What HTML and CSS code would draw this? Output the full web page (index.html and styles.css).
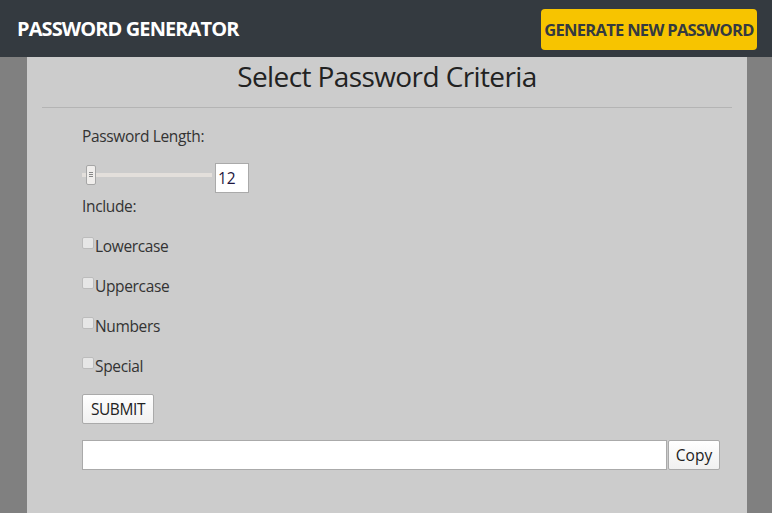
FILE: index.html
```html
<!DOCTYPE html>
<html>
<head>
<meta charset="utf-8">
<link rel="stylesheet" href="styles.css">
</head>
<body>
<header class="topbar">
  <div class="brand">PASSWORD GENERATOR</div>
  <button class="gen-btn">GENERATE NEW PASSWORD</button>
</header>
<main class="card">
  <h1 class="title">Select Password Criteria</h1>
  <hr class="rule">
  <form class="form">
    <div class="label">Password Length:</div>
    <div class="length-row">
      <input class="slider" type="range" min="8" max="128" value="12">
      <input class="num" type="text" value="12">
    </div>
    <div class="label include">Include:</div>
    <label class="check"><input type="checkbox">Lowercase</label>
    <label class="check"><input type="checkbox">Uppercase</label>
    <label class="check"><input type="checkbox">Numbers</label>
    <label class="check"><input type="checkbox">Special</label>
    <button type="button" class="submit">SUBMIT</button>
    <div class="out-row">
      <input class="out" type="text">
      <button type="button" class="copy">Copy</button>
    </div>
  </form>
</main>
</body>
</html>
```
FILE: styles.css
```css
* { box-sizing: border-box; }
html, body { margin: 0; padding: 0; height: 100%; }
body {
  background: #808080;
  font-family: "Open Sans", "DejaVu Sans", sans-serif;
  color: #333;
  display: flex;
  flex-direction: column;
  overflow: hidden;
}
.topbar {
  height: 57px;
  background: #343a40;
  display: flex;
  align-items: center;
  justify-content: space-between;
  padding: 0 15px 0 17px;
  flex: none;
}
.brand {
  color: #fff;
  font-weight: 700;
  font-size: 20px;
  letter-spacing: -0.9px;
}
.gen-btn {
  background: #f7c400;
  border: none;
  border-radius: 4px;
  height: 41px;
  width: 216px;
  padding: 0;
  color: #343a40;
  font-family: "Open Sans", sans-serif;
  font-weight: 700;
  font-size: 16.5px;
  letter-spacing: -0.7px;
  margin-top: 1px;
  white-space: nowrap;
}
.card {
  width: 720px;
  margin: 0 0 0 27px;
  background: #cccccc;
  flex: 1;
  padding: 0 15px;
}
.title {
  margin: 0;
  padding-top: 0;
  text-align: center;
  font-weight: 400;
  font-size: 28px;
  letter-spacing: -0.6px;
  color: #222;
  line-height: 38px;
}
.rule {
  margin: 12px 0 0;
  border: none;
  border-top: 1px solid #b4b4b4;
}
.form {
  padding: 17px 0 0 40px;
  display: flex;
  flex-direction: column;
  align-items: flex-start;
  font-size: 15.5px;
  letter-spacing: -0.35px;
}
.label { line-height: 22px; color: #333; }
.length-row {
  display: flex;
  align-items: center;
  margin-top: 16px;
}
.slider {
  -webkit-appearance: none;
  appearance: none;
  width: 130px;
  height: 22px;
  margin: 0 3px 6px 0;
  background: transparent;
}
.slider::-webkit-slider-runnable-track {
  height: 4px;
  background: #e3dfdb;
  border-radius: 0;
}
.slider::-webkit-slider-thumb {
  -webkit-appearance: none;
  width: 10px;
  height: 20px;
  margin-top: -8px;
  border: 1px solid #a6a6a6;
  border-radius: 2px;
  background:
    linear-gradient(#888, #888) 2px 6px / 4px 1px no-repeat,
    linear-gradient(#888, #888) 2px 8px / 4px 1px no-repeat,
    linear-gradient(#888, #888) 2px 10px / 4px 1px no-repeat,
    #f0eeec;
}
.num {
  width: 34px;
  height: 30px;
  border: 1px solid #aaa;
  background: #fff;
  font-family: "Open Sans", sans-serif;
  font-size: 15.5px;
  padding: 0 0 0 2px;
  color: #1e1640;
}
.include { margin-top: 2px; }
.check {
  display: flex;
  align-items: center;
  line-height: 22px;
  margin-top: 18px;
  color: #333;
}
.check:first-of-type { margin-top: 18px; }
.check input {
  -webkit-appearance: none;
  appearance: none;
  margin: 0 1px 0 0;
  width: 12px;
  height: 12px;
  border: 1px solid #bcbcbc;
  border-radius: 2px;
  background: #e6e6e6;
  position: relative;
  top: -3px;
}
.submit {
  margin-top: 17px;
  height: 30px;
  width: 72px;
  padding: 0;
  background: linear-gradient(#fff, #f0f0f0);
  border: 1px solid #aaa;
  border-radius: 2px;
  font-family: "Open Sans", sans-serif;
  font-size: 15.5px;
  color: #222;
  letter-spacing: -0.4px;
}
.out-row {
  display: flex;
  margin-top: 16px;
}
.out {
  width: 585px;
  height: 30px;
  border: 1px solid #aaa;
  background: #fff;
  margin: 0;
}
.copy {
  width: 52px;
  height: 30px;
  margin-left: 1px;
  padding: 0;
  background: linear-gradient(#fff, #f0f0f0);
  border: 1px solid #aaa;
  border-radius: 2px;
  font-family: "Open Sans", sans-serif;
  font-size: 15.5px;
  color: #222;
}
```
